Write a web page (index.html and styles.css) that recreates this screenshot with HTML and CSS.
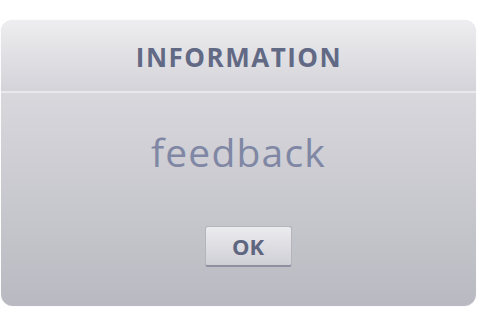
FILE: index.html
```html
<!DOCTYPE html>
<html>
<head>
<meta charset="utf-8">
<link rel="stylesheet" href="styles.css">
</head>
<body>
<div class="dialog">
  <div class="header">INFORMATION</div>
  <div class="content">
    <div class="message">feedback</div>
    <button class="ok">OK</button>
  </div>
</div>
</body>
</html>
```
FILE: styles.css
```css
html, body {
  margin: 0;
  padding: 0;
  background: #ffffff;
}
body {
  width: 480px;
  height: 320px;
  overflow: hidden;
  font-family: "Open Sans", "DejaVu Sans", sans-serif;
}
.dialog {
  margin: 20px 0 0 1px;
  width: 475px;
  height: 286px;
  border-radius: 12px;
  overflow: hidden;
  display: flex;
  flex-direction: column;
  background: linear-gradient(#e2e2e6, #b9b9c1);
  box-shadow: 0 0 1px rgba(0,0,0,0.15);
}
.header {
  height: 73px;
  box-sizing: border-box;
  padding: 3px 0 0 1px;
  flex: none;
  display: flex;
  align-items: center;
  justify-content: center;
  font-weight: 700;
  font-size: 26px;
  color: #626985;
  letter-spacing: 1.5px;
  background: linear-gradient(#eeeef0, #d3d3d9);
  border-bottom: 2px solid #e9e9ec;
}
.content {
  flex: 1;
  display: flex;
  flex-direction: column;
  align-items: center;
}
.message {
  margin-top: 34px;
  font-size: 39px;
  line-height: 50px;
  letter-spacing: 1.2px;
  color: #7f87a4;
}
.ok {
  margin-top: 49px;
  margin-left: 19px;
  width: 87px;
  height: 41px;
  border: 1px solid #b4b4bd;
  border-bottom: 2px solid #8e90a0;
  border-radius: 3px;
  background: linear-gradient(#ececef, #cfcfd6);
  font-family: "Open Sans", "DejaVu Sans", sans-serif;
  font-weight: 700;
  font-size: 22px;
  color: #5f6680;
  padding: 0;
}
```
